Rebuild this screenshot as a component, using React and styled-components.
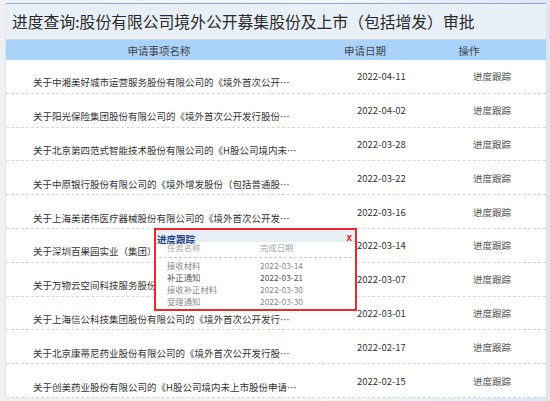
import React from 'react';
import styled, { createGlobalStyle } from 'styled-components';

const GlobalStyle = createGlobalStyle`
  html, body {
    margin: 0;
    padding: 0;
  }
  body {
    width: 550px;
    height: 401px;
    overflow: hidden;
    font-family: "Noto Sans CJK SC", "Liberation Sans", sans-serif;
    background: linear-gradient(90deg, #eef0f3 0%, #f4f6f8 60%, #dce7f3 100%);
  }
`;

const Page = styled.div`
  position: relative;
  margin: 3px 0 0 5px;
  width: 540px;
  background: #fff;
  border-left: 1px solid #e2e4e8;
  border-right: 1px solid #dfe3ea;
`;

const TitleBar = styled.h1`
  margin: 0;
  height: 35px;
  display: flex;
  align-items: center;
  padding-left: 6px;
  font-size: 15.8px;
  font-weight: 400;
  color: #2a2a2a;
  background: #e9eff6;
  border-top: 1px solid #8ea7d6;
  border-bottom: 1px solid #d3d8df;
`;

const HeadRow = styled.div`
  display: grid;
  grid-template-columns: 306px 106px 102px 1fr;
  height: 20px;
  align-items: center;
  background: #aad3fb;
  font-size: 10.5px;
  color: #444;
`;

const HeadCell = styled.div`
  text-align: center;
`;

const Row = styled.div`
  display: grid;
  grid-template-columns: 351px 116px 1fr;
  align-items: center;
  height: 33.8px;
  box-sizing: border-box;
  border-bottom: 1px dashed #d8d8d8;
  font-size: 9.5px;
  color: #333;
`;

const NameCell = styled.div`
  margin-top: 12px;
  padding: 0 58px 0 27px;
  white-space: nowrap;
  overflow: hidden;
  text-overflow: ellipsis;
`;

const DateCell = styled.div`
  color: #333;
`;

const OpCell = styled.div`
  color: #555;
`;

const Popup = styled.div`
  position: absolute;
  left: 148px;
  top: 225px;
  width: 199px;
  height: 79px;
  background: #fff;
  border: 2px solid #e82a2a;
  overflow: hidden;
`;

const PopupHead = styled.div`
  display: flex;
  align-items: flex-start;
  height: 12px;
  background: #e7eef6;
  padding: 4px 0 0 1px;
  box-sizing: border-box;
`;

const PopupTitle = styled.span`
  font-size: 9.5px;
  font-weight: 700;
  line-height: 11px;
  color: #1c3f8c;
`;

const Close = styled.span`
  position: absolute;
  right: 3px;
  top: 2px;
  font-family: "Liberation Sans", sans-serif;
  font-size: 10px;
  font-weight: 700;
  line-height: 11px;
  color: #e0201c;
`;

const PopupCols = styled.div`
  display: grid;
  grid-template-columns: 93px 1fr;
  margin: -1px 3px 0;
  padding-left: 8px;
  height: 17px;
  box-sizing: border-box;
  font-size: 8.4px;
  line-height: 12px;
  color: #a5a5a5;
  border-bottom: 1px dashed #cfcfcf;
`;

const TaskList = styled.div`
  padding: 1px 0 0 11px;
`;

const TaskRow = styled.div`
  display: grid;
  grid-template-columns: 93px 1fr;
  height: 12px;
  line-height: 12px;
  font-size: 8.4px;
  color: ${(p) => (p.$dark ? '#555' : '#8a8a8a')};
`;

const rows = [
  ['关于中湘美好城市运营服务股份有限公司的《境外首次公开发行股份（包括增发）审批》', '2022-04-11'],
  ['关于阳光保险集团股份有限公司的《境外首次公开发行股份（包括增发）审批》', '2022-04-02'],
  ['关于北京第四范式智能技术股份有限公司的《H股公司境内未上市股份申请“全流通”》', '2022-03-28'],
  ['关于中原银行股份有限公司的《境外增发股份（包括普通股、优先股）审批》', '2022-03-22'],
  ['关于上海美诺伟医疗器械股份有限公司的《境外首次公开发行股份（包括增发）审批》', '2022-03-16'],
  ['关于深圳百果园实业（集团）股份有限公司的《境外首次公开发行股份（包括增发）审批》', '2022-03-14'],
  ['关于万物云空间科技服务股份有限公司的《境外首次公开发行股份（包括增发）审批》', '2022-03-07'],
  ['关于上海信公科技集团股份有限公司的《境外首次公开发行股份（包括增发）审批》', '2022-03-01'],
  ['关于北京康蒂尼药业股份有限公司的《境外首次公开发行股份（包括增发）审批》', '2022-02-17'],
  ['关于创美药业股份有限公司的《H股公司境内未上市股份申请“全流通”》', '2022-02-15'],
];

const tasks = [
  ['接收材料', '2022-03-14'],
  ['补正通知', '2022-03-21', true],
  ['接收补正材料', '2022-03-30'],
  ['受理通知', '2022-03-30'],
];

const App = () => (
  <>
    <GlobalStyle />
    <Page>
      <TitleBar>进度查询:股份有限公司境外公开募集股份及上市（包括增发）审批</TitleBar>
      <HeadRow>
        <HeadCell>申请事项名称</HeadCell>
        <HeadCell>申请日期</HeadCell>
        <HeadCell>操作</HeadCell>
      </HeadRow>
      {rows.map(([name, date]) => (
        <Row key={date}>
          <NameCell>{name}</NameCell>
          <DateCell>{date}</DateCell>
          <OpCell>进度跟踪</OpCell>
        </Row>
      ))}
      <Popup>
        <PopupHead>
          <PopupTitle>进度跟踪</PopupTitle>
          <Close>x</Close>
        </PopupHead>
        <PopupCols>
          <span>任务名称</span>
          <span>完成日期</span>
        </PopupCols>
        <TaskList>
          {tasks.map(([t, d, dark]) => (
            <TaskRow key={t} $dark={dark}>
              <span>{t}</span>
              <span>{d}</span>
            </TaskRow>
          ))}
        </TaskList>
      </Popup>
    </Page>
  </>
);

export default App;
